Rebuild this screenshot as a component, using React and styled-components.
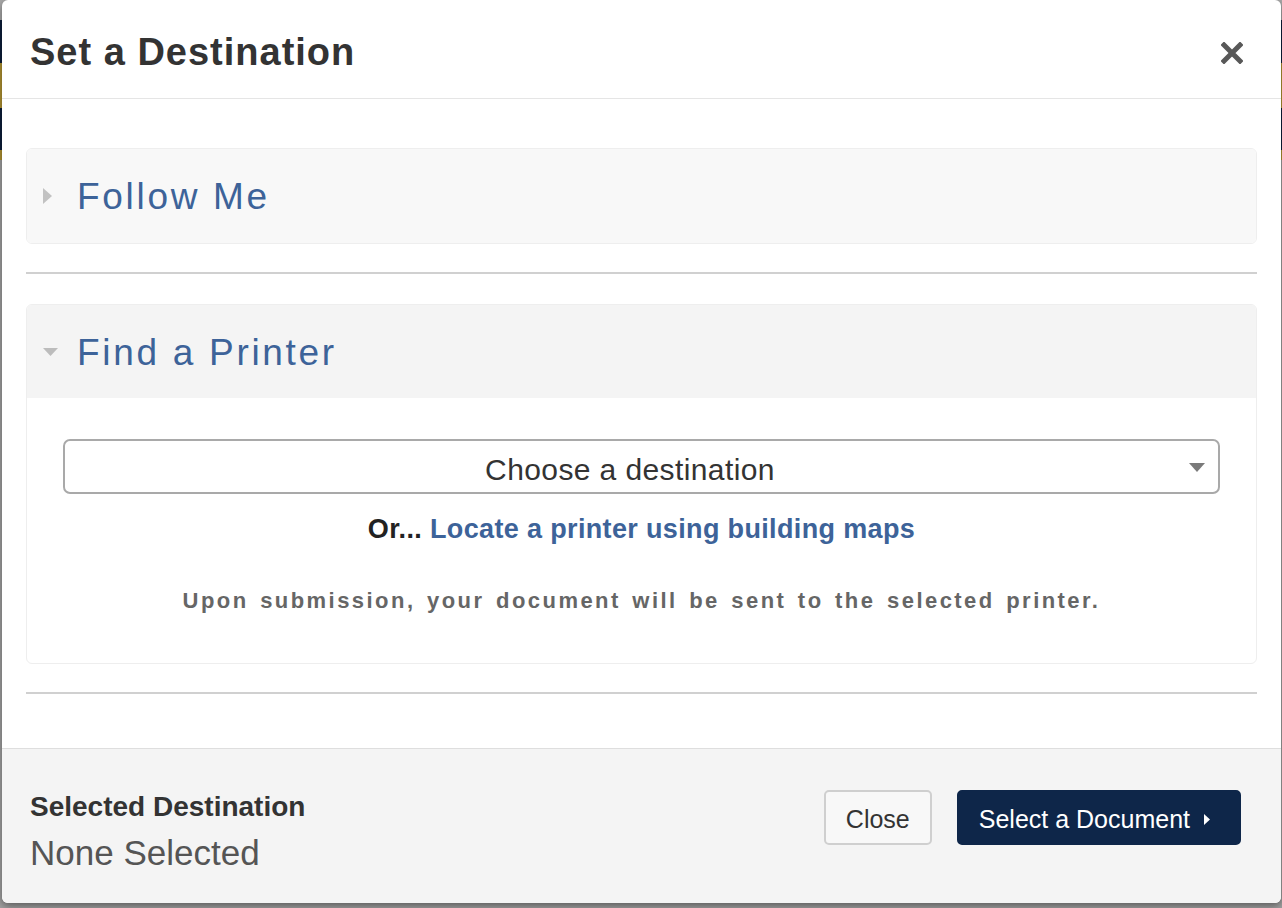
import React from 'react';
import styled, {createGlobalStyle} from 'styled-components';

const GlobalStyle = createGlobalStyle`
  html, body {
    margin: 0;
    padding: 0;
  }
  body {
    font-family: "Liberation Sans", Arial, Helvetica, sans-serif;
    overflow: hidden;
  }
`;

const Backdrop = styled.div`
  width: 1282px;
  height: 908px;
  box-sizing: border-box;
  padding: 0 1px 5px 2px;
  background: linear-gradient(
    to bottom,
    #a9a9a9 0,
    #a9a9a9 20px,
    #0d1f3b 20px,
    #0d1f3b 63px,
    #b39532 63px,
    #b39532 108px,
    #0d1f3b 108px,
    #0d1f3b 150px,
    #b39532 150px,
    #b39532 160px,
    #a2a2a2 160px,
    #a2a2a2 100%
  );
`;

const Modal = styled.div`
  height: 100%;
  background: #fff;
  border-radius: 6px;
  box-shadow: 0 3px 9px rgba(0, 0, 0, 0.45);
  display: flex;
  flex-direction: column;
  overflow: hidden;
`;

const Header = styled.div`
  height: 99px;
  box-sizing: border-box;
  border-bottom: 1px solid #e5e5e5;
  display: flex;
  align-items: center;
  justify-content: space-between;
  padding: 7px 38px 0 28px;
`;

const Title = styled.h4`
  margin: 0;
  font-size: 38px;
  font-weight: bold;
  letter-spacing: 1px;
  color: #333;
`;

const CloseX = styled.button`
  border: 0;
  background: none;
  padding: 0;
  width: 22px;
  height: 22px;
  cursor: pointer;
  display: flex;
`;

const Body = styled.div`
  flex: 1;
  padding: 49px 24px 0;
`;

const Panel = styled.div`
  border: 1px solid #eeeeee;
  border-radius: 6px;
  background: ${p => (p.open ? '#fff' : '#f8f8f8')};
  overflow: hidden;
`;

const PanelHeading = styled.div`
  height: ${p => (p.open ? '93px' : '94px')};
  display: flex;
  align-items: center;
  padding-left: 16px;
  background: ${p => (p.open ? '#f4f4f4' : '#f8f8f8')};
`;

const Caret = styled.span`
  width: 34px;
  display: flex;
  align-items: center;
`;

const PanelTitle = styled.a`
  padding-top: 2px;
  font-size: 37px;
  letter-spacing: 2.7px;
  color: #3d6399;
  text-decoration: none;
`;

const Divider = styled.hr`
  border: 0;
  height: 2px;
  background: #d0d0d0;
  margin: ${p => p.gap};
`;

const PanelBody = styled.div`
  padding: 41px 36px 47px;
  text-align: center;
`;

const SelectBox = styled.div`
  position: relative;
  height: 55px;
  box-sizing: border-box;
  border: 2px solid #a9a9a9;
  border-radius: 7px;
  display: flex;
  align-items: center;
  justify-content: center;
  padding: 6px 23px 0 0;
  font-size: 30px;
  letter-spacing: 0.4px;
  color: #333;
`;

const SelectArrow = styled.svg`
  position: absolute;
  right: 13px;
  top: 22px;
`;

const OrLine = styled.div`
  margin-top: 20px;
  line-height: 30px;
  font-size: 27px;
  font-weight: bold;
  letter-spacing: 0.35px;
  color: #222;
`;

const MapLink = styled.a`
  color: #3d6399;
  text-decoration: none;
`;

const Note = styled.p`
  margin: 42px 0 0;
  line-height: 30px;
  font-size: 22px;
  font-weight: bold;
  letter-spacing: 2.45px;
  word-spacing: 3px;
  color: #666;
`;

const Footer = styled.div`
  height: 155px;
  box-sizing: border-box;
  border-top: 1px solid #dedede;
  background: #f4f4f4;
  display: flex;
  align-items: flex-start;
  justify-content: space-between;
  padding: 43px 40px 0 28px;
`;

const Destination = styled.div`
  display: flex;
  flex-direction: column;
`;

const DestLabel = styled.div`
  font-size: 28px;
  line-height: 30px;
  font-weight: bold;
  color: #333;
`;

const DestValue = styled.div`
  margin-top: 11px;
  font-size: 35px;
  line-height: 40px;
  color: #555;
`;

const Actions = styled.div`
  display: flex;
  gap: 25px;
  margin-top: -2px;
`;

const Button = styled.button`
  height: 55px;
  box-sizing: border-box;
  border-radius: 5px;
  font-family: inherit;
  font-size: 25px;
  display: flex;
  align-items: center;
  gap: 14px;
  cursor: pointer;
  border: 2px solid ${p => (p.primary ? '#0e2649' : '#cfcfcf')};
  background: ${p => (p.primary ? '#0e2649' : '#f8f8f8')};
  color: ${p => (p.primary ? '#fff' : '#333')};
  padding: ${p => (p.primary ? '3px 29px 0 20px' : '3px 20px 0 20px')};
`;

const Tri = ({dir, color}) => {
  const pts = {
    right: '0,0 9,8 0,16',
    down: '0,0 15,0 7.5,8',
  };
  const [w, h] = dir === 'right' ? [9, 16] : [15, 8];
  return (
    <svg width={w} height={h} viewBox={`0 0 ${w} ${h}`}>
      <polygon points={pts[dir]} fill={color} />
    </svg>
  );
};

export default function App() {
  return (
    <>
      <GlobalStyle />
      <Backdrop>
        <Modal>
          <Header>
            <Title>Set a Destination</Title>
            <CloseX aria-label="Close">
              <svg width="22" height="22" viewBox="0 0 22 22">
                <path d="M3 3 L19 19 M19 3 L3 19" stroke="#585858" strokeWidth="5" strokeLinecap="square" />
              </svg>
            </CloseX>
          </Header>

          <Body>
            <Panel>
              <PanelHeading>
                <Caret><Tri dir="right" color="#c2c2c2" /></Caret>
                <PanelTitle href="#">Follow Me</PanelTitle>
              </PanelHeading>
            </Panel>

            <Divider gap="28px 0 30px" />

            <Panel open>
              <PanelHeading open>
                <Caret><Tri dir="down" color="#bcbcbc" /></Caret>
                <PanelTitle href="#">Find a Printer</PanelTitle>
              </PanelHeading>
              <PanelBody>
                <SelectBox>
                  Choose a destination
                  <SelectArrow width="16" height="9" viewBox="0 0 16 9">
                    <polygon points="0,0 16,0 8,9" fill="#7a7a7a" />
                  </SelectArrow>
                </SelectBox>
                <OrLine>
                  Or... <MapLink href="#">Locate a printer using building maps</MapLink>
                </OrLine>
                <Note>Upon submission, your document will be sent to the selected printer.</Note>
              </PanelBody>
            </Panel>

            <Divider gap="28px 0 0" />
          </Body>

          <Footer>
            <Destination>
              <DestLabel>Selected Destination</DestLabel>
              <DestValue>None Selected</DestValue>
            </Destination>
            <Actions>
              <Button>Close</Button>
              <Button primary>
                Select a Document
                <svg width="6" height="11" viewBox="0 0 6 11">
                  <polygon points="0,0 6,5.5 0,11" fill="#fff" />
                </svg>
              </Button>
            </Actions>
          </Footer>
        </Modal>
      </Backdrop>
    </>
  );
}
